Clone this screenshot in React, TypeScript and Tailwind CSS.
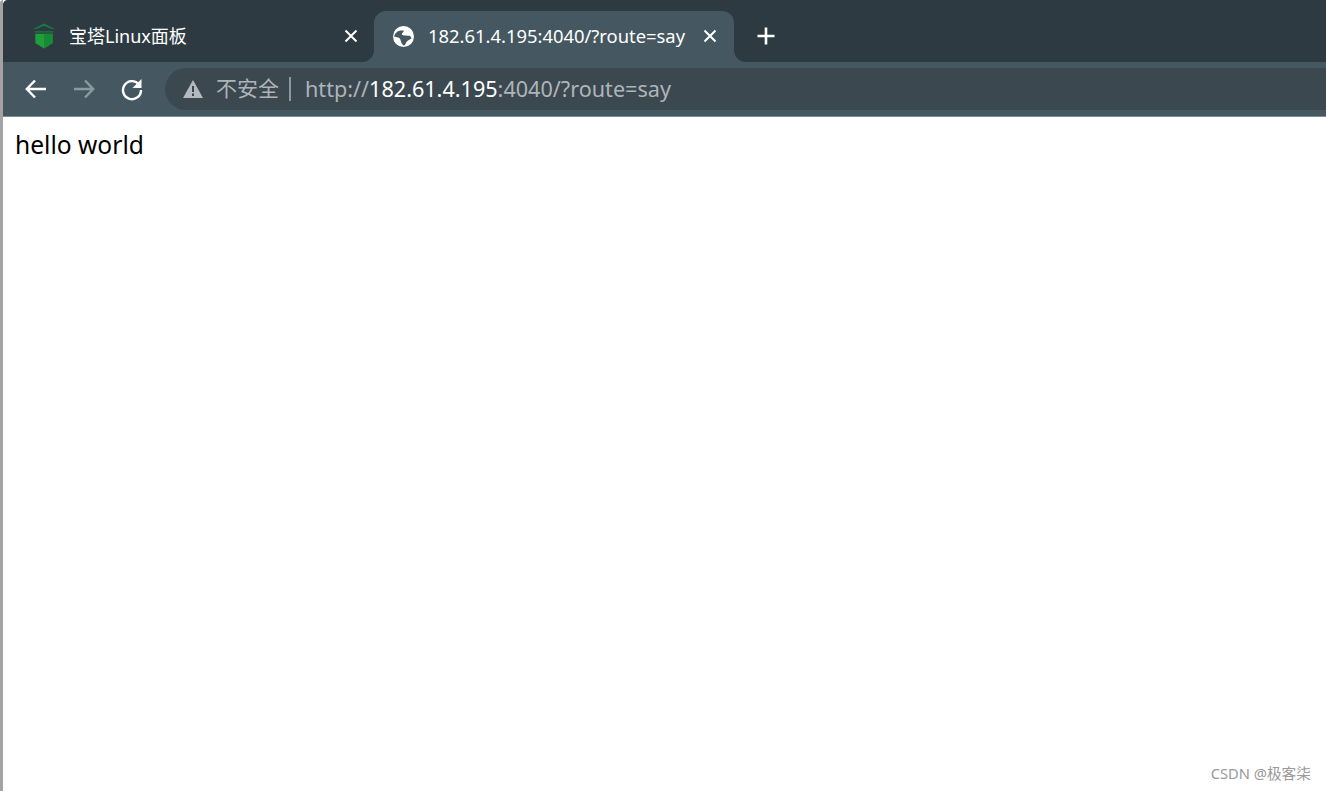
import React, { ReactElement } from 'react';

const uiFont = '"Noto Sans", "Noto Sans CJK SC", sans-serif';

function Shield(): ReactElement {
	return (
		<svg width="26" height="26" viewBox="0 0 24 24" className="shrink-0">
			<path d="M12 .5 2 5.500h2.500L12 2.500l7.500 3H22z" fill="#15803a" />
			<path d="M3.500 7.500h17v1.300h-17z" fill="#15803a" />
			<path d="M4 10h16v8.500l-8 5-8-5z" fill="#1f9e3c" />
			<path d="M12 10h8v8.500l-8 5z" fill="#178a33" />
		</svg>
	);
}

function Globe(): ReactElement {
	return (
		<svg width="21" height="21" viewBox="0 0 20 20" className="shrink-0">
			<circle cx="10" cy="10" r="10" fill="#ffffff" />
			<path
				d="M3.300 5.700C5 4.500 8 3.700 10.500 4.500 10 6 8 6.800 8.500 8c1 1.500 5 .8 7 1.300 1.300.4 2 1.200 2 2.500-1.500 1-3.300 1.500-4.500 3.200-.8 1.200-1.200 3-2.700 3.800-1.500-.8-2.600-3-3-5-.3-1.500-1-2.300-2.300-2.800-1.300-.3-2.800-.5-4-1 .3-1.500 1.500-3.200 2.800-4.300z"
				fill="#455760"
			/>
		</svg>
	);
}

function Close(): ReactElement {
	return (
		<svg width="14" height="14" viewBox="0 0 14 14" className="shrink-0">
			<path d="M1.500 1.500l11 11M12.500 1.500l-11 11" stroke="#ffffff" strokeWidth="2" />
		</svg>
	);
}

export default function App(): ReactElement {
	return (
		<div className="flex h-[791px] w-[1326px] overflow-hidden bg-white" style={{ fontFamily: uiFont }}>
			<div className="w-[3px] shrink-0 rounded-tl-[6px] bg-[#a3a3a3]" />
			<div className="flex min-w-0 flex-1 flex-col">
				<div className="flex h-[62px] shrink-0 overflow-hidden rounded-tl-[5px] bg-[#455760]">
					<div className="flex w-[371px] items-center rounded-br-xl bg-[#2e3a41] pt-[10px] pr-4 pl-[28px]">
						<Shield />
						<span className="ml-[12px] flex-1 text-[18px] text-white">宝塔Linux面板</span>
						<Close />
					</div>
					<div className="w-[360px] bg-[#2e3a41] pt-[11px]">
						<div className="flex h-[51px] items-center rounded-t-xl bg-[#455760] pr-[17px] pb-[1px] pl-[19px]">
							<Globe />
							<span className="ml-[14px] flex-1 text-[18.4px] text-white">182.61.4.195:4040/?route=say</span>
							<Close />
						</div>
					</div>
					<div className="flex flex-1 items-center rounded-bl-xl bg-[#2e3a41] pt-[10px] pl-[22px]">
						<svg width="20" height="20" viewBox="0 0 20 20">
							<path d="M10 1.500v17M1.500 10h17" stroke="#ffffff" strokeWidth="2.6" />
						</svg>
					</div>
				</div>
				<div className="flex h-[55px] shrink-0 items-center border-b border-[#7f8c92] bg-[#455760] pl-[21px]">
					<svg width="24" height="24" viewBox="0 0 24 24" fill="none" stroke="#ffffff" strokeWidth="2.4">
						<path d="M22 12H3M11 3.500 2.800 12l8.200 8.500" />
					</svg>
					<svg width="24" height="24" viewBox="0 0 24 24" fill="none" stroke="#8c999f" strokeWidth="2.4" className="ml-6">
						<path d="M2 12h19M13 3.500l8.200 8.500-8.200 8.500" />
					</svg>
					<svg width="24" height="24" viewBox="0 0 24 24" className="ml-6">
						<path d="M19 7.500A9 9 0 1 0 21 13" fill="none" stroke="#ffffff" strokeWidth="2.4" />
						<path d="M21.500 2v9h-9z" fill="#ffffff" />
					</svg>
					<div className="ml-[21px] flex h-[42px] flex-1 items-center rounded-l-[21px] bg-[#3b4850] pl-[18px] text-[21.6px]">
						<svg width="20" height="18" viewBox="0 0 20 18" className="shrink-0">
							<path d="M10 0 20 18H0z" fill="#b3b9bd" />
							<path d="M9 6h2v6H9zM9 13.500h2V16H9z" fill="#3b4850" />
						</svg>
						<span className="ml-[13px] text-[21px] text-[#aeb5b9]">不安全</span>
						<div className="mr-[14px] ml-[10px] h-[24px] w-[2px] bg-[#8e999e]" />
						<span className="text-[#aeb5b9]">http://</span>
						<span className="text-white">182.61.4.195</span>
						<span className="text-[#aeb5b9]">:4040/?route=say</span>
					</div>
				</div>
				<div className="flex flex-1 flex-col justify-between bg-white">
					<p className="pt-[11px] pl-[12px] text-[24.6px] leading-[34px] text-black">hello world</p>
					<p className="self-end pr-[15px] pb-[7px] text-[14.7px] text-[#9a9a9a]">CSDN @极客柒</p>
				</div>
			</div>
		</div>
	);
}
